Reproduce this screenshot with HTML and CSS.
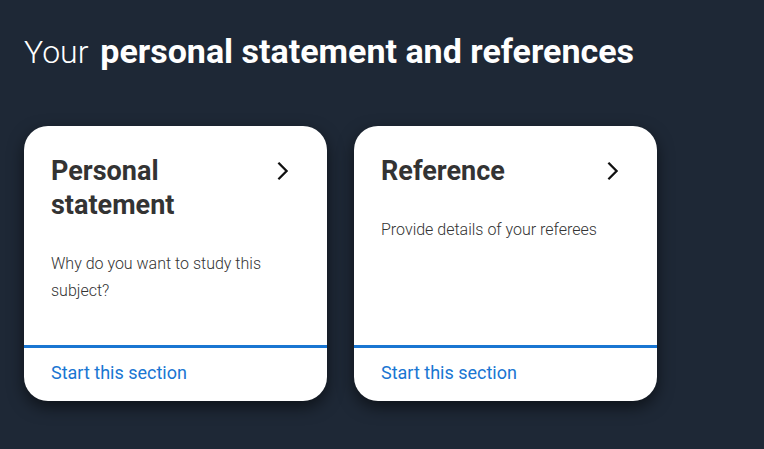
FILE: index.html
```html
<!DOCTYPE html>
<html lang="en">
<head>
<meta charset="utf-8">
<title>Your personal statement and references</title>
<link rel="stylesheet" href="styles.css">
</head>
<body>
<main class="page">
  <h1 class="page-title">Your <strong>personal statement and references</strong></h1>
  <div class="cards">
    <section class="card">
      <div class="card-body">
        <div class="card-head">
          <h2 class="card-title">Personal statement</h2>
          <svg class="chevron" viewBox="0 0 24 24" width="24" height="24" aria-hidden="true"><path d="M8.2 4.6L15.6 12L8.2 19.4" fill="none" stroke="#111" stroke-width="2.3" stroke-linecap="square"/></svg>
        </div>
        <p class="card-text">Why do you want to study this subject?</p>
      </div>
      <div class="card-foot"><a class="card-link" href="#">Start this section</a></div>
    </section>
    <section class="card">
      <div class="card-body">
        <div class="card-head">
          <h2 class="card-title">Reference</h2>
          <svg class="chevron" viewBox="0 0 24 24" width="24" height="24" aria-hidden="true"><path d="M8.2 4.6L15.6 12L8.2 19.4" fill="none" stroke="#111" stroke-width="2.3" stroke-linecap="square"/></svg>
        </div>
        <p class="card-text">Provide details of your referees</p>
      </div>
      <div class="card-foot"><a class="card-link" href="#">Start this section</a></div>
    </section>
  </div>
</main>
</body>
</html>
```
FILE: styles.css
```css
html, body {
  margin: 0;
  padding: 0;
  height: 100%;
}
body {
  background: #1e2836;
  font-family: Roboto, "Liberation Sans", Arial, sans-serif;
}
.page {
  padding: 32px 24px;
}
.page-title {
  margin: 0;
  color: #ffffff;
  font-size: 32px;
  line-height: 38px;
  font-weight: 300;
}
.page-title strong {
  font-weight: 700;
  font-size: 34px;
  margin-left: 4px;
}
.cards {
  display: flex;
  gap: 27px;
  margin-top: 55px;
}
.card {
  width: 303px;
  height: 275px;
  background: #ffffff;
  border-radius: 24px;
  box-shadow: 0 6px 16px rgba(0, 0, 0, 0.55);
  display: flex;
  flex-direction: column;
  overflow: hidden;
}
.card-body {
  flex: 1;
  padding: 28px 27px 0 27px;
}
.card-head {
  display: flex;
  justify-content: space-between;
  align-items: flex-start;
}
.card-title {
  margin: 0;
  font-size: 27px;
  line-height: 34px;
  font-weight: 700;
  color: #333333;
  max-width: 210px;
}
.chevron {
  margin-top: 5px;
  margin-right: 5px;
  flex: none;
}
.card-text {
  margin: 28px 0 0 0;
  font-size: 16px;
  line-height: 27px;
  font-weight: 300;
  color: #333333;
  max-width: 230px;
}
.card-foot {
  border-top: 3px solid #1976d2;
  height: 56px;
  display: flex;
  align-items: center;
  padding: 0 27px 5px 27px;
  box-sizing: border-box;
}
.card-link {
  color: #1976d2;
  text-decoration: none;
  font-size: 18px;
  font-weight: 400;
}
```
